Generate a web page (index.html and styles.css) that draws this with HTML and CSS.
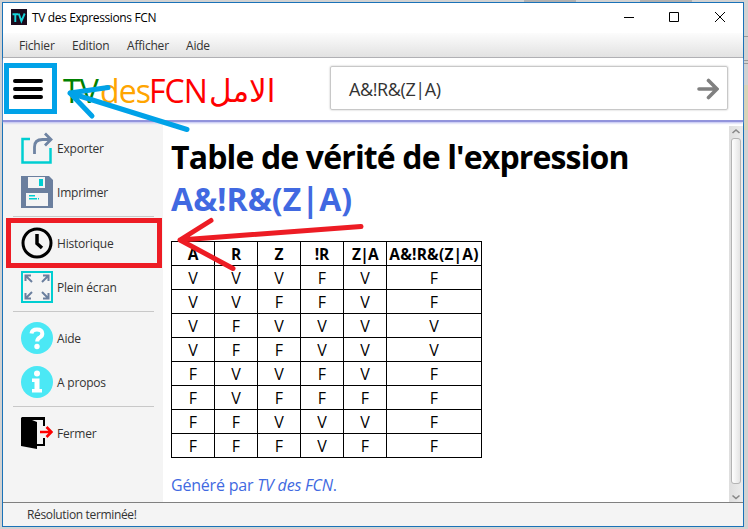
FILE: index.html
```html
<!DOCTYPE html>
<html lang="fr">
<head>
<meta charset="utf-8">
<title>TV des Expressions FCN</title>
<link rel="stylesheet" href="styles.css">
</head>
<body>
<div class="window">
  <header class="titlebar">
    <svg class="app-icon" width="16" height="16" viewBox="0 0 16 16"><rect width="16" height="16" fill="#1b0b1d"/><path d="M1.500 5.200h5.600M4.300 5.200V13M7.700 4.500l2.700 7.600 3.300-7.600" fill="none" stroke="#19d3da" stroke-width="1.900"/></svg>
    <span class="title">TV des Expressions FCN</span>
    <svg class="controls" width="102" height="12" viewBox="0 0 102 12" fill="none" stroke="#000"><path d="M0 5.500h10M45.500.5h9v9h-9zM91 0l10 10M101 0L91 10"/></svg>
  </header>
  <nav class="menubar"><span class="m1">Fichier</span><span class="m2">Edition</span><span class="m3">Afficher</span><span class="m4">Aide</span></nav>
  <div class="toolbar">
    <svg class="burger" width="30" height="20" viewBox="0 0 30 20" stroke="#000" stroke-width="4" stroke-linecap="round"><path d="M2 2h26M2 10h26M2 18h26"/></svg>
    <div class="logo"><span class="tv">TV</span><span class="des">des</span><span class="fcn">FCN</span><span class="ar" lang="ar" dir="rtl">الامل</span></div>
    <div class="search"><span>A&amp;!R&amp;(Z|A)</span>
      <svg width="22" height="22" viewBox="0 0 22 22" fill="none" stroke="#808080" stroke-width="3.600" stroke-linecap="round"><path d="M2 11h16M11.500 2.500L20 11l-8.500 8.500"/></svg>
    </div>
  </div>
  <div class="body">
    <aside class="sidebar">
      <div class="item"><svg width="32" height="32" viewBox="0 0 32 32" fill="none"><path d="M9 7H1.500v23.500h28V16" stroke="#00ced1" stroke-width="2.500"/><path d="M13.500 22v-7q0-7.500 8-7.500h8M24 1.500l6 6-6 6" stroke="#6f84a3" stroke-width="2.800"/></svg><span>Exporter</span></div>
      <div class="item"><svg width="32" height="32" viewBox="0 0 32 32"><path d="M0 0h28l4 4v28H0z" fill="#6b7f9e"/><path d="M7 1h17v11H7zM5 17h22v13H5z" fill="#f4f4f4"/><path d="M18 3h4v7h-4zM8 19h6v1.500H8zM8 22h8v1.500H8zM17 22h1v1.500h-1z" fill="#00ced1"/></svg><span>Imprimer</span></div>
      <hr>
      <div class="item"><svg width="32" height="32" viewBox="0 0 32 32" fill="none" stroke="#000" stroke-width="3"><circle cx="16" cy="16" r="14"/><path d="M16 7v9.500l5 4.500" stroke-width="3.500"/></svg><span>Historique</span></div>
      <div class="item"><svg width="32" height="32" viewBox="0 0 32 32" fill="none"><path d="M1 1h30v30H1z" stroke="#00ced1" stroke-width="2"/><path d="M11 11L5 5M4.500 10V4.500H10M21 11l6-6M22 4.500h5.500V10M11 21l-6 6M4.500 22v5.500H10M21 21l6 6M22 27.500h5.500V22" stroke="#6b7f9e" stroke-width="2"/></svg><span>Plein écran</span></div>
      <hr>
      <div class="item"><svg width="32" height="32" viewBox="0 0 32 32"><circle cx="16" cy="16" r="16" fill="#4be8f5"/><path d="M10.500 11.500q.5-4 5.500-4t5.300 3.800q.2 2.500-2.600 4.100-2.500 1.300-2.500 4.200" fill="none" stroke="#fff" stroke-width="4"/><circle cx="16" cy="24.500" r="2.700" fill="#fff"/></svg><span>Aide</span></div>
      <div class="item"><svg width="32" height="32" viewBox="0 0 32 32"><circle cx="16" cy="16" r="16" fill="#4be8f5"/><circle cx="16" cy="7.500" r="3" fill="#fff"/><path d="M11 12.500h7.500V23H21v3.500H11V23h2.500v-7H11z" fill="#fff"/></svg><span>A propos</span></div>
      <hr>
      <div class="item"><svg width="32" height="32" viewBox="0 0 32 32"><path d="M0 1l1-1h23v9h-2V3H11l5 2v27L0 29zM16 27h6v-6h2v8h-8z"/><path d="M19 15h11M25.500 10l5 5-5 5" fill="none" stroke="#f00" stroke-width="2.600"/></svg><span>Fermer</span></div>
    </aside>
    <main class="content">
      <h1><span class="h-a">Table de vérité de l'expression</span><br><span class="h-b">A&amp;!R&amp;(Z|A)</span></h1>
      <table>
        <colgroup><col span="5" class="narrow"><col class="wide"></colgroup>
        <tr><th>A</th><th>R</th><th>Z</th><th>!R</th><th class="expr">Z|A</th><th class="expr">A&amp;!R&amp;(Z|A)</th></tr>
        <tr><td>V</td><td>V</td><td>V</td><td>F</td><td>V</td><td>F</td></tr>
        <tr><td>V</td><td>V</td><td>F</td><td>F</td><td>V</td><td>F</td></tr>
        <tr><td>V</td><td>F</td><td>V</td><td>V</td><td>V</td><td>V</td></tr>
        <tr><td>V</td><td>F</td><td>F</td><td>V</td><td>V</td><td>V</td></tr>
        <tr><td>F</td><td>V</td><td>V</td><td>F</td><td>V</td><td>F</td></tr>
        <tr><td>F</td><td>V</td><td>F</td><td>F</td><td>F</td><td>F</td></tr>
        <tr><td>F</td><td>F</td><td>V</td><td>V</td><td>V</td><td>F</td></tr>
        <tr><td>F</td><td>F</td><td>F</td><td>V</td><td>F</td><td>F</td></tr>
      </table>
      <p class="credit">Généré par <em>TV des FCN</em>.</p>
    </main>
    <div class="scrollbar">
      <svg width="14" height="12" viewBox="0 0 14 12" fill="none" stroke="#888" stroke-width="1.600"><path d="M3.500 7L7 4l3.500 3"/></svg>
      <div class="thumb"></div>
      <svg width="14" height="18" viewBox="0 0 14 18" fill="none" stroke="#888" stroke-width="1.600"><path d="M3.500 11.500l3.500 3 3.500-3"/></svg>
    </div>
  </div>
  <footer class="status">Résolution terminée!</footer>
</div>
<svg class="marks" width="748" height="529" viewBox="0 0 748 529" fill="none" stroke-linecap="round" stroke-linejoin="round">
  <g stroke="#00a2e8" stroke-width="5"><path d="M6.500 65.500h48v46h-48z" stroke-linejoin="miter"/><path d="M187 129.500L70 93l38-5.500M70 93l22 23"/></g>
  <g stroke="#ed1c24" stroke-width="5"><path d="M8.500 220.500h151v45H8.500z" stroke-linejoin="miter"/><path d="M361 226.500L180 240l31-19.500M180 240l53 28.500"/></g>
</svg>
</body>
</html>
```
FILE: styles.css
```css
* { box-sizing: border-box; }
body {
  margin: 0;
  width: 748px;
  height: 529px;
  padding: 2px 4px 2px 2px;
  overflow: hidden;
  font-family: "Open Sans", "Noto Sans", sans-serif;
  background:
    linear-gradient(#999, #999) 744px 36px / 4px 1px no-repeat,
    linear-gradient(#999, #999) 744px 60px / 4px 1px no-repeat,
    linear-gradient(#999, #999) 744px 63px / 4px 1px no-repeat,
    linear-gradient(#d8d4b8, #d8d4b8) 744px 85px / 4px 45px no-repeat,
    linear-gradient(#b0b0b0, #b0b0b0) 524px 0 / 52px 2px no-repeat,
    linear-gradient(#b0b0b0, #b0b0b0) 640px 0 / 52px 2px no-repeat,
    #d2d2d2;
}
.window {
  width: 742px;
  height: 525px;
  border: 1px solid #1a72b8;
  background: #fff;
  display: flex;
  flex-direction: column;
}
.titlebar { height: 30px; padding: 0 17px 0 8px; display: flex; align-items: center; flex: none; }
.app-icon { margin-top: -2px; }
.title { margin: -1px 0 0 5px; font-size: 12px; letter-spacing: -0.38px; color: #000; white-space: nowrap; }
.controls { margin-left: auto; margin-top: 0; }
.menubar {
  height: 25px;
  flex: none;
  display: flex;
  align-items: center;
  padding-left: 16px;
  background: linear-gradient(#fcfcfc, #e2e2e2);
  border-bottom: 1px solid #b0b0b0;
  font-size: 12px;
  letter-spacing: -0.2px;
  color: #333;
}
.menubar span { white-space: nowrap; }
.m1 { width: 53px; } .m2 { width: 55px; } .m3 { width: 59px; }
.toolbar {
  height: 64px;
  flex: none;
  display: flex;
  align-items: center;
  padding: 0 15px 2px 10px;
  border-bottom: 2px solid #9294dc;
  box-shadow: 0 1px 2px #b9baf0;
  position: relative;
}
.burger { margin-top: 2px; }
.logo { display: flex; margin-left: 20px; width: 267px; font-size: 32px; line-height: 44px; white-space: nowrap; margin-top: 5px; }
.tv { width: 37px; color: #008000; letter-spacing: -1px; }
.des { width: 49px; color: #ffa500; letter-spacing: -0.9px; }
.fcn { width: 60px; color: #f00; letter-spacing: -1px; }
.ar { color: #f00; font-family: "DejaVu Sans", sans-serif; font-size: 31px; }
.search {
  flex: 1;
  height: 44px;
  display: flex;
  align-items: center;
  justify-content: space-between;
  padding: 0 8px 0 18px;
  border: 1px solid #c8c8c8;
  border-radius: 2px;
  box-shadow: 0 0 2px #bbb;
  font-size: 18px;
  color: #333;
}
.search span { letter-spacing: -0.4px; margin-top: 2px; }
.search svg { margin-top: 1px; }
.body { flex: 1; display: flex; min-height: 0; }
.sidebar {
  width: 160px;
  background: #f4f4f4;
  padding: 4px 9px 0 10px;
  display: flex;
  flex-direction: column;
}
.item { height: 44px; display: flex; align-items: center; gap: 4px; padding-left: 8px; font-size: 12px; letter-spacing: -0.2px; color: #333; white-space: nowrap; }
hr { width: 100%; height: 1px; border: 0; margin: 2px 0 4px; background: #c8c8c8; flex: none; }
.content { flex: 1; padding: 14px 0 0 8px; min-width: 0; }
h1 { margin: 0; font-size: 32px; line-height: 42px; height: 104px; white-space: nowrap; color: #000; }
.h-a { letter-spacing: -0.86px; }
.h-b { letter-spacing: 0.1px; color: #4169e1; }
table { border-collapse: collapse; table-layout: fixed; width: 311px; font-size: 16px; line-height: 23px; color: #000; margin-top: 1px; }
.narrow { width: 43px; } .wide { width: 95px; }
tr { height: 24px; }
th, td { border: 1px solid #000; padding: 1px 0 0; height: 24px; line-height: 22px; text-align: center; white-space: nowrap; }
th { font-size: 15.500px; }
.expr { letter-spacing: 0.2px; }
th.expr:nth-child(5) { letter-spacing: -0.8px; }
.credit { margin: 16px 0 0; font-size: 16px; line-height: 22px; color: #4169e1; letter-spacing: -0.2px; }
.scrollbar {
  width: 14px;
  margin-top: 4px;
  background: linear-gradient(90deg, #dedede, #ececec);
  display: flex;
  flex-direction: column;
}
.scrollbar svg { flex: none; }
.thumb { flex: 1; margin: 0 2px; border: 1px solid #b4b4b4; border-radius: 3px; background: linear-gradient(90deg, #fff, #e4e4e4); }
.status {
  height: 24px;
  flex: none;
  border-top: 1px solid #808080;
  background: #f4f4f4;
  padding-left: 24px;
  font-size: 12px;
  letter-spacing: -0.35px;
  line-height: 23px;
  color: #333;
}
.marks { position: absolute; left: 0; top: 0; }
```
